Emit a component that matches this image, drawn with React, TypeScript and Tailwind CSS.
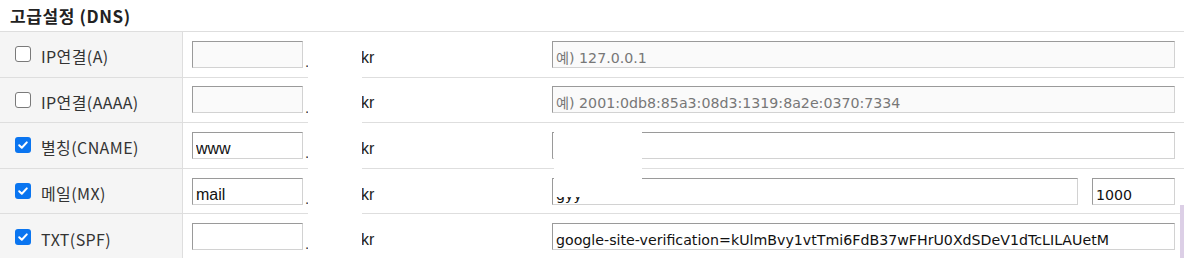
import React from 'react'

type Row = {
    label: string
    checked: boolean
    host: string
    value: string
    placeholder?: string
    priority?: string
}

const rows: Row[] = [
    { label: 'IP연결(A)', checked: false, host: '', value: '', placeholder: '예) 127.0.0.1' },
    { label: 'IP연결(AAAA)', checked: false, host: '', value: '', placeholder: '예) 2001:0db8:85a3:08d3:1319:8a2e:0370:7334' },
    { label: '별칭(CNAME)', checked: true, host: 'www', value: '' },
    { label: '메일(MX)', checked: true, host: 'mail', value: 'gyy', priority: '1000' },
    { label: 'TXT(SPF)', checked: true, host: '', value: 'google-site-verification=kUlmBvy1vtTmi6FdB37wFHrU0XdSDeV1dTcLILAUetM' },
]

const labelFont = { fontFamily: '"Noto Sans CJK KR", "Liberation Sans", sans-serif' }
const inputFont = { fontFamily: '"DejaVu Sans", "Noto Sans CJK KR", sans-serif', fontSize: '14.2px' }
const arial = { fontFamily: '"Liberation Sans", sans-serif' }

function CheckBox({ checked }: { checked: boolean }) {
    if (checked) {
        return (
            <span className="flex h-[16px] w-[16px] shrink-0 items-center justify-center rounded-[3px] bg-[#0a75f0]">
                <svg width="12" height="12" viewBox="0 0 12 12" fill="none">
                    <path d="M2.2 6.2 L4.8 8.8 L9.8 3.4" stroke="white" strokeWidth="2" strokeLinecap="round" strokeLinejoin="round" />
                </svg>
            </span>
        )
    }
    return <span className="block h-[16px] w-[16px] shrink-0 rounded-[3px] border-[1.5px] border-[#7a7a7a] bg-white" />
}

function Field({ value, placeholder, disabled, className, font }: { value: string; placeholder?: string; disabled: boolean; className: string; font: React.CSSProperties }) {
    return (
        <input
            readOnly
            value={value}
            placeholder={placeholder}
            style={font}
            className={`h-[27px] border border-t-[#9a9a9a] border-l-[#9a9a9a] border-r-[#d2d2d2] border-b-[#d2d2d2] px-[3px] pb-0 pt-[7px] text-[#111] outline-none placeholder:text-[#777] ${disabled ? 'bg-[#fafafa]' : 'bg-white'} ${className}`}
        />
    )
}

export default function App() {
    return (
        <div className="relative h-[258px] w-[1184px] overflow-hidden bg-white text-[#333]">
            <div className="flex h-[31px] items-center pl-[10px] pt-[1px] text-[17px] font-bold tracking-[0.6px] text-[#222]" style={labelFont}>
                고급설정 (DNS)
            </div>
            <div className="border-t border-[#dedede]">
                {rows.map((r) => (
                    <div key={r.label} className="grid h-[45.6px] grid-cols-[183px_178px_191px_1fr] border-b border-[#dedede]">
                        <div className="flex items-center gap-[10px] border-r border-[#dedede] bg-[#f5f5f5] pl-[15px]" style={labelFont}>
                            <CheckBox checked={r.checked} />
                            <span className="pt-[4px] text-[16px] tracking-[0.4px]">{r.label}</span>
                        </div>
                        <div className="flex items-center pl-[9px]">
                            <Field value={r.host} disabled={!r.checked} className="w-[111px]" font={{ ...arial, fontSize: 16 }} />
                            <span className="mt-[16px] pl-[2px] text-[15px] text-[#333]" style={arial}>.</span>
                        </div>
                        <div className="flex items-center pt-[7px] text-[16px] text-[#222]" style={arial}>
                            kr
                        </div>
                        <div className="flex items-center gap-[14px] pr-[9px]">
                            <Field value={r.value} placeholder={r.placeholder} disabled={!r.checked} className="min-w-0 flex-1" font={inputFont} />
                            {r.priority && <Field value={r.priority} disabled={false} className="w-[83px]" font={inputFont} />}
                        </div>
                    </div>
                ))}
            </div>
            {/* masked areas */}
            <div className="absolute left-[308px] top-[34px] h-[224px] w-[54px] bg-white" />
            <div className="absolute left-[554px] top-[131px] h-[66px] w-[88px] bg-white" />
            <div className="absolute right-0 top-[205px] h-[53px] w-[4px] bg-[#dccfe6]" />
        </div>
    )
}
